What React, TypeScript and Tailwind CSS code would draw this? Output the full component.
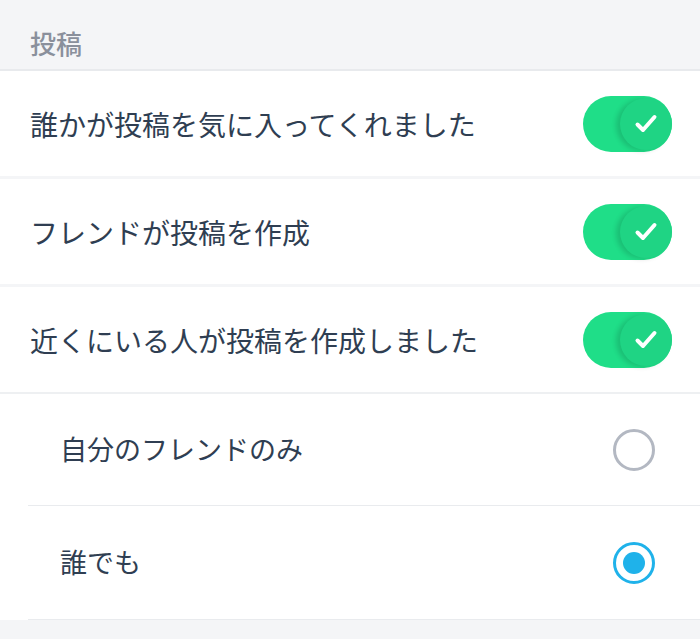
const font = { fontFamily: '"Noto Sans CJK JP", "Noto Sans", sans-serif' };

function Toggle() {
  return (
    <div className="relative h-[56px] w-[89px] rounded-full bg-[#1fde88]">
      <div className="absolute right-0 top-[2px] flex h-[52px] w-[52px] items-center justify-center rounded-full bg-[#1fd484] shadow-[-4px_1px_5px_rgba(0,0,0,0.14)]">
        <svg width="24" height="24" viewBox="0 0 24 24" fill="none">
          <path d="M3.5 12.5l5.5 5.5L20.5 5" stroke="white" strokeWidth="4" strokeLinecap="round" strokeLinejoin="round" />
        </svg>
      </div>
    </div>
  );
}

function Radio({ checked }: { checked?: boolean }) {
  if (checked) {
    return (
      <div className="flex h-[42px] w-[42px] items-center justify-center rounded-full border-[3px] border-[#1fb2ea]">
        <div className="h-[22px] w-[22px] rounded-full bg-[#1fb2ea]" />
      </div>
    );
  }
  return <div className="h-[42px] w-[42px] rounded-full border-[3px] border-[#b3b8c2]" />;
}

const toggles = ['誰かが投稿を気に入ってくれました', 'フレンドが投稿を作成', '近くにいる人が投稿を作成しました'];

export default function App() {
  return (
    <div className="h-[639px] w-[700px] overflow-hidden bg-[#f4f5f7]" style={font}>
      <div className="flex h-[69px] items-end px-[30px] pb-[7px] text-[26px] font-medium text-[#8a909c]">投稿</div>
      <div className="border-t-2 border-[#e8eaed]">
        {toggles.map((label, i) => (
          <div
            key={label}
            className={`flex h-[105px] items-center justify-between bg-white pl-[30px] pr-[28px] ${i < 2 ? 'mb-[3px]' : ''}`}
          >
            <span className="text-[28px] text-[#2f3e52]">{label}</span>
            <Toggle />
          </div>
        ))}
      </div>
      <div className="border-t-2 border-[#eef0f2] bg-white pl-[28px]">
        <div className="flex h-[112px] items-center justify-between border-b border-[#e9ebee] pl-[32px] pr-[45px]">
          <span className="text-[27px] text-[#2f3e52]">自分のフレンドのみ</span>
          <Radio />
        </div>
        <div className="flex h-[114px] items-center justify-between border-b border-[#e9ebee] pl-[32px] pr-[45px]">
          <span className="text-[27px] text-[#2f3e52]">誰でも</span>
          <Radio checked />
        </div>
      </div>
    </div>
  );
}
